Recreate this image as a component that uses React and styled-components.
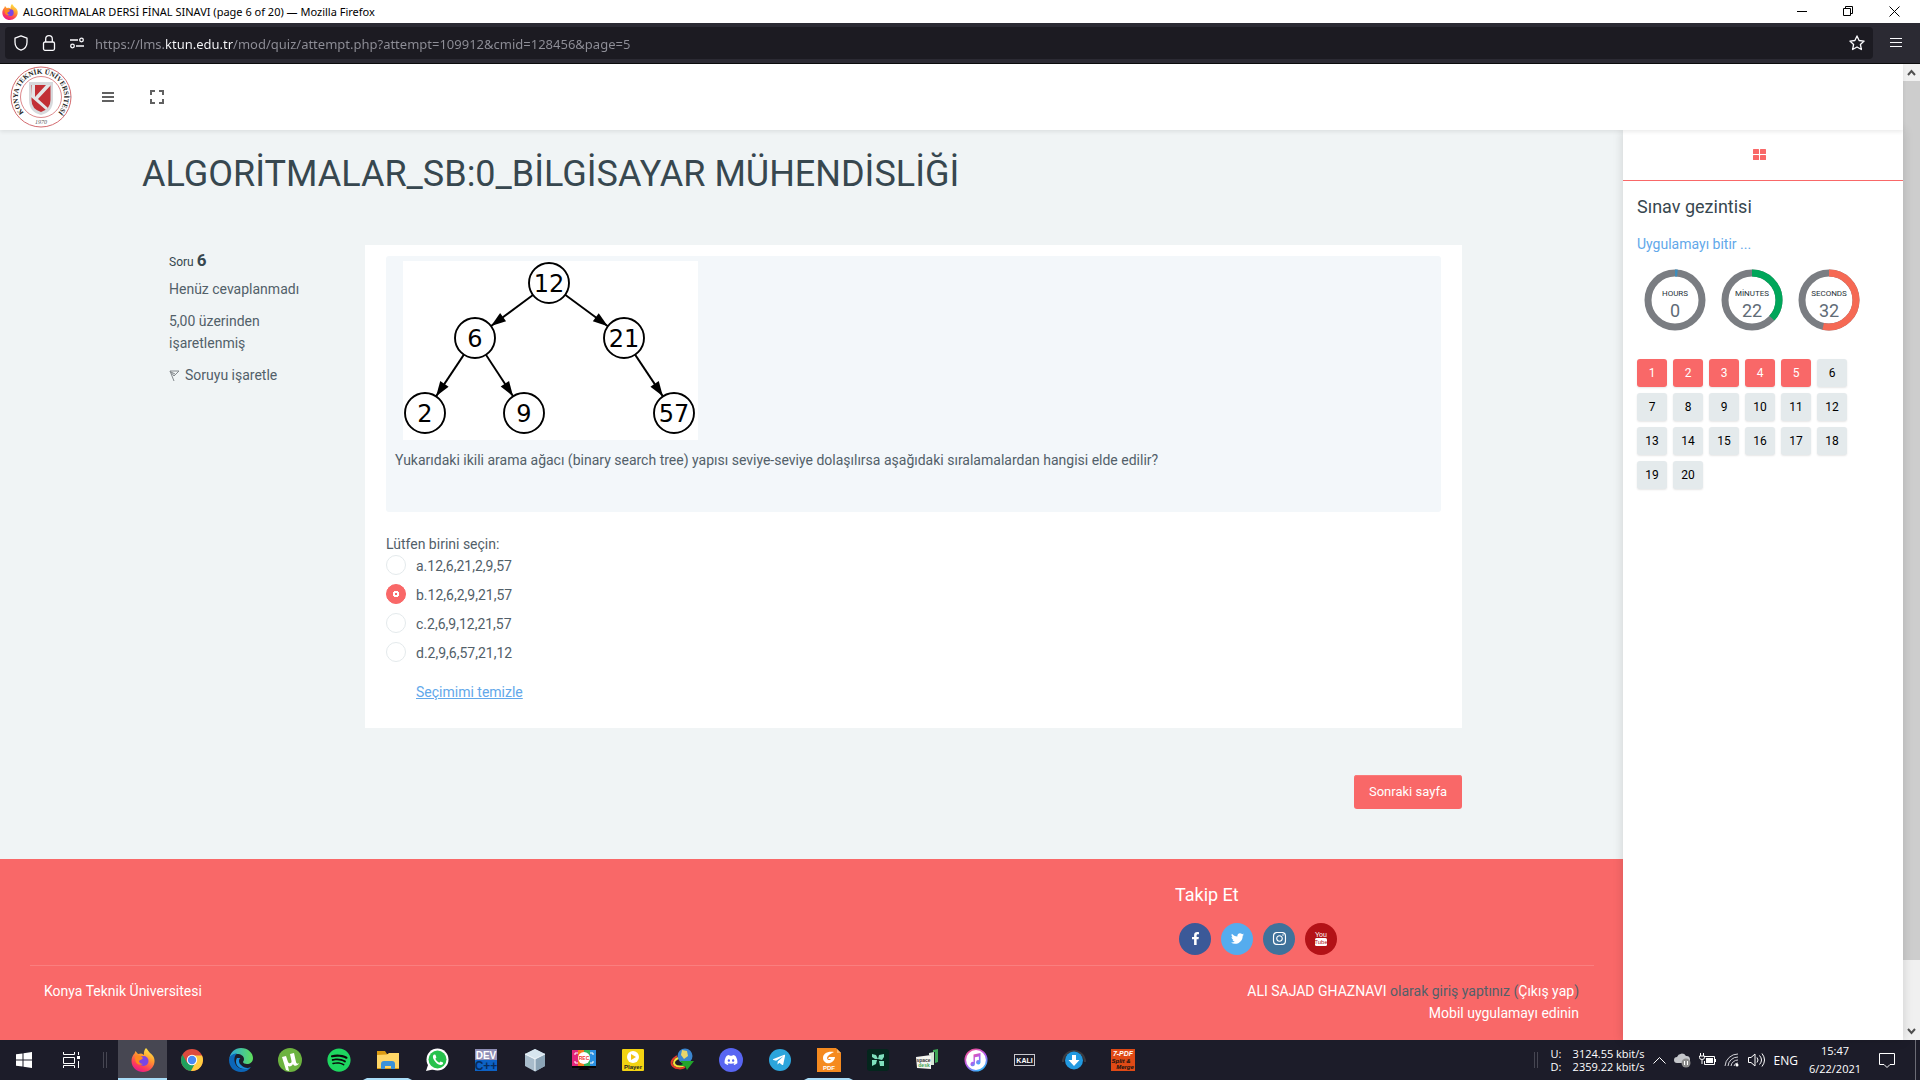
import React, { useState } from "react";
import styled, { createGlobalStyle, css } from "styled-components";
import { FaFacebookF, FaTwitter, FaInstagram, FaDiscord, FaTelegramPlane, FaSpotify } from "react-icons/fa";

const red = "#f96868";
const ui = `"Open Sans", "Noto Sans", sans-serif`;
const chromeFont = `"Noto Sans", "Open Sans", sans-serif`;

const GlobalStyle = createGlobalStyle`
  *, *::before, *::after { box-sizing: border-box; }
  body { margin: 0; background: #f0f4f5; }
  h1, h2, h3, p, fieldset, legend { margin: 0; padding: 0; border: 0; font-weight: 400; }
  button { font: inherit; border: 0; background: none; padding: 0; cursor: pointer; }
  svg { display: block; flex: none; }
  a { text-decoration: none; }
`;

const Screen = styled.div`
  min-height: 100vh;
  display: flex;
  flex-direction: column;
  font: 400 14px/22px Roboto, sans-serif;
  color: #526069;
`;

/* ---------- browser chrome ---------- */
const TitleBar = styled.header`
  height: 23px;
  display: flex;
  align-items: center;
  gap: 5px;
  padding: 0 20px 0 2px;
  background: #fff;
  color: #000;
  font: 11px/16px ${chromeFont};
`;
const WindowButtons = styled.div`
  margin-left: auto;
  display: flex;
  gap: 35px;
  button { width: 11px; height: 11px; }
`;
const NavBar = styled.div`
  height: 41px;
  display: flex;
  align-items: center;
  padding: 0 18px 0 5px;
  gap: 17px;
  background: #2b2a33;
  border-bottom: 1px solid #0c0c0d;
  color: #fbfbfe;
`;
const AddressBox = styled.form`
  flex: 1;
  height: 32px;
  display: flex;
  align-items: center;
  padding: 0 8px;
  background: #1c1b22;
  border-radius: 4px;
`;
const AddressIcons = styled.div`
  display: flex;
  align-items: center;
  gap: 12px;
  margin-right: 10px;
`;
const AddressInput = styled.input`
  flex: 1;
  min-width: 0;
  border: 0;
  outline: 0;
  padding: 2px 0 0;
  font: 13px/20px ${chromeFont};
  color: transparent;
  background: linear-gradient(90deg, #8f8f98 70px, #fbfbfe 70px 138px, #8f8f98 138px);
  -webkit-background-clip: text;
  background-clip: text;
`;

/* ---------- page ---------- */
const Viewport = styled.div`
  flex: 1;
  display: flex;
`;
const Page = styled.div`
  flex: 1;
  min-width: 0;
  display: flex;
  flex-direction: column;
`;
const SiteHeader = styled.header`
  position: relative;
  z-index: 2;
  height: 66px;
  display: flex;
  align-items: center;
  padding-left: 10px;
  background: #fff;
  box-shadow: 0 2px 4px rgba(0, 0, 0, 0.08);
  button { width: 49px; height: 40px; display: grid; place-items: center; color: #616161; }
`;
const Logo = styled.a`
  margin-right: 11px;
`;
const Columns = styled.div`
  flex: 1;
  display: flex;
`;
const Content = styled.div`
  flex: 1;
  min-width: 0;
  display: flex;
  flex-direction: column;
  background: #f0f4f5;
`;
const Main = styled.main`
  flex: 1;
  width: 100%;
  max-width: 1339px;
  margin: 0 auto;
  padding: 22px 0 50px;
`;
const Title = styled.h1`
  font-size: 36px;
  line-height: 44px;
  color: #37474f;
  margin-bottom: 49px;
`;
const Question = styled.section`
  display: flex;
  padding: 0 19px;
`;
const Info = styled.div`
  flex: 0 0 204px;
  padding: 4px 48px 0 8px;
  display: flex;
  flex-direction: column;
  gap: 10px;
`;
const QuestionNumber = styled.h3`
  font-size: 12px;
  line-height: 22px;
  color: #37474f;
  margin-bottom: -5px;
  strong { font-size: 17px; font-weight: 700; }
`;
const FlagLink = styled.a`
  display: flex;
  align-items: center;
  gap: 5px;
  color: #526069;
  white-space: nowrap;
`;
const Card = styled.form`
  flex: 1;
  min-width: 0;
  padding: 11px 21px 25px;
  background: #fff;
`;
const Formulation = styled.div`
  padding: 5px 9px 41px;
  margin-bottom: 21px;
  background: #f3f7fa;
  border-radius: 3px;
  p { margin-top: 9px; }
`;
const TreePicture = styled.svg`
  margin-left: 8px;
  background: #fff;
  font: 24px "DejaVu Sans", sans-serif;
`;
const Answers = styled.fieldset`
  display: flex;
  flex-direction: column;
  gap: 7px;
  legend { line-height: 22px; }
`;
const Option = styled.label`
  display: flex;
  gap: 10px;
`;
const Radio = styled.input.attrs({ type: "radio" })`
  appearance: none;
  width: 20px;
  height: 20px;
  margin: 0;
  border: 1px solid #e4eaec;
  border-radius: 50%;
  background: #fff;
  &:checked {
    border-color: ${red};
    background: radial-gradient(circle, ${red} 1px, #fff 1px, #fff 3px, ${red} 3px) ${red};
  }
`;
const ClearChoice = styled.a`
  display: block;
  width: fit-content;
  margin: 17px 0 0 30px;
  color: #62a8ea;
  text-decoration: underline;
`;
const Actions = styled.div`
  display: flex;
  justify-content: flex-end;
  padding: 47px 19px 0;
`;
const NextButton = styled.button`
  && {
    height: 34px;
    padding: 0 15px;
    font-size: 13px;
    color: #fff;
    background: ${red};
    border-radius: 3px;
    box-shadow: inset 0 1px 0 #fa7a7a;
  }
`;

/* ---------- footer ---------- */
const Footer = styled.footer`
  padding: 25px 29px 16px 30px;
  background: ${red};
  color: #526069;
  a { color: #fff; }
`;
const FollowRow = styled.div`
  display: flex;
  justify-content: flex-end;
  padding-bottom: 10px;
  border-bottom: 1px solid #fa7f7f;
`;
const Follow = styled.div`
  width: 419px;
  h2 { font-size: 18px; line-height: 22px; color: #fff; margin-bottom: 17px; }
`;
const Socials = styled.div`
  display: flex;
  gap: 10px;
  padding-left: 4px;
`;
const Social = styled.a`
  width: 32px;
  height: 32px;
  display: grid;
  place-items: center;
  padding-bottom: 2px;
  border-radius: 50%;
  background: ${(p) => p.$color};
`;
const Legal = styled.div`
  display: flex;
  justify-content: space-between;
  padding: 14px 15px 0 14px;
`;
const Account = styled.div`
  text-align: right;
`;

/* ---------- quiz navigation ---------- */
const Aside = styled.aside`
  position: relative;
  z-index: 1;
  flex: 0 0 280px;
  background: #fff;
  box-shadow: 0 0 10px rgba(0, 0, 0, 0.15);
`;
const TabBar = styled.div`
  height: 51px;
  border-bottom: 1px solid ${red};
  color: ${red};
  display: flex;
  button { flex: 1; display: grid; place-items: center; padding: 0 8px 2px 0; color: inherit; }
`;
const Navigation = styled.nav`
  padding: 15px 14px;
  h2 { font-size: 18px; line-height: 22px; color: #37474f; margin-bottom: 15px; }
`;
const FinishLink = styled.a`
  color: #62a8ea;
`;
const Timer = styled.div`
  display: flex;
  gap: 15px;
  margin: 14px 0 28px 7px;
`;
const Dial = styled.svg`
  font-family: Roboto, sans-serif;
`;
const Pages = styled.div`
  display: grid;
  grid-template-columns: repeat(6, 30px);
  gap: 6px;
`;
const PageLink = styled.a`
  height: 28px;
  border-radius: 3px;
  font-size: 12px;
  line-height: 28px;
  text-align: center;
  box-shadow: 0 1px 2px rgba(0, 0, 0, 0.1);
  ${(p) => (p.$done ? css`background: ${red}; color: #fff;` : css`background: #e4eaec; color: #000;`)}
`;

const ScrollTrack = styled.div`
  flex: 0 0 17px;
  display: flex;
  flex-direction: column;
  background: #f0f0f0;
  button { height: 17px; display: grid; place-items: center; }
`;
const ScrollRoom = styled.div`
  flex: 1;
  display: grid;
  grid-template-rows: 93.3% 1fr;
`;
const ScrollThumb = styled.div`
  background: #cdcdcd;
`;

/* ---------- taskbar ---------- */
const Taskbar = styled.div`
  height: 40px;
  display: flex;
  align-items: stretch;
  background: #1c1c29;
  color: #fff;
  font: 11px/13px ${ui};
`;
const SystemButtons = styled.div`
  width: 118px;
  display: flex;
  align-items: center;
  gap: 31px;
  padding-left: 16px;
  button { color: #fff; }
`;
const Grip = styled.span`
  width: 4px;
  height: 16px;
  margin-left: ${(p) => p.$lead}px;
  align-self: center;
  border: solid #464652;
  border-width: 0 1px;
`;
const AppButton = styled.button`
  && {
    width: 49px;
    display: grid;
    place-items: center;
    border: solid transparent;
    border-width: 2px 4px 2px;
    ${(p) => p.$running && css`border-bottom-color: #a9ddf8;`}
    ${(p) => p.$active && css`background: #474752; border: solid #474752; border-width: 2px 0; border-bottom-color: #a9ddf8;`}
  }
`;
const Tray = styled.div`
  margin-left: auto;
  display: flex;
  align-items: center;
  padding-right: 4px;
`;
const Meter = styled.div`
  display: grid;
  grid-template-columns: 22px auto;
  margin: 0 8px 0 13px;
`;
const TrayIcons = styled.div`
  display: flex;
  align-items: center;
  gap: 8px;
`;
const Language = styled.span`
  margin: 0 2px 0 9px;
  font-size: 12px;
`;
const Clock = styled.time`
  text-align: center;
  line-height: 18px;
  width: 70px;
  margin-right: 9px;
`;
const Notices = styled.div`
  padding-right: 20px;
  height: 40px;
  display: flex;
  align-items: center;
  border-right: 1px solid #6b6b75;
`;

/* ---------- drawings ---------- */
const FirefoxIcon = ({ size }) => (
  <svg width={size} height={size} viewBox="0 0 24 24">
    <defs>
      <linearGradient id={`fx${size}`} x1="0.8" y1="0" x2="0.3" y2="1">
        <stop offset="0" stopColor="#fff14f" /><stop offset="0.4" stopColor="#ff9a2e" />
        <stop offset="0.75" stopColor="#ff4057" /><stop offset="1" stopColor="#e5178f" />
      </linearGradient>
    </defs>
    <path d="M15 0c2 2 3 4 4 5 3 2 5 5 4.500 9-.7 6-5.500 10-11.500 10S.500 19.500.5 13c0-3 1-5.500 3-7.500L4.500 3 7 6l3-.5c1 0 2 .5 3 1.500C12.500 4 13.500 1.500 15 0z" fill={`url(#fx${size})`} />
    <circle cx="12.500" cy="13" r="5" fill="#7a45e5" />
    <path d="M5 8c3-1 5 0 7 2-1 2-3 1.500-4 3 0 2 2 3 4 3-3 2-7 0-7.500-3S4 9 5 8z" fill="#ff8a1e" />
  </svg>
);
const UniversitySeal = () => (
  <svg width="62" height="62" viewBox="0 0 62 62">
    <defs><path id="sealArc" d="M14.600 47.400A23.200 23.200 0 1 1 47.400 47.400" /></defs>
    <circle cx="31" cy="31" r="30" fill="#fff" stroke="#d36a6e" />
    <circle cx="31" cy="31" r="20.500" fill="none" stroke="#d36a6e" strokeWidth="0.800" />
    <text fontFamily='"Liberation Serif", serif' fontWeight="700" fontSize="7" fill="#222">
      <textPath href="#sealArc" startOffset="1">KONYA TEKNİK ÜNİVERSİTESİ</textPath>
    </text>
    <path d="M19 16h24v18q0 12-12 15-12-3-12-15z" fill="#d7d9dc" />
    <path d="M21.500 19h19v15q0 9-9.500 12-9.500-3-9.500-12z" fill="#c22f35" />
    <path d="M22 19l3 0v12L36 19h5L28 33l10 9-2 2L21 31z" fill="#e4e5e7" />
    <text x="31" y="58" textAnchor="middle" fontFamily='"Liberation Serif", serif' fontStyle="italic" fontSize="6" fill="#555">1970</text>
  </svg>
);

const nodes = { n12: [146, 22, "12"], n6: [72, 77, "6"], n21: [221, 77, "21"], n2: [22, 152, "2"], n9: [121, 152, "9"], n57: [271, 152, "57"] };
const edges = [["n12", "n6"], ["n12", "n21"], ["n6", "n2"], ["n6", "n9"], ["n21", "n57"]];
const Tree = () => (
  <TreePicture width="295" height="179" viewBox="0 0 295 179" role="img" aria-label="İkili arama ağacı">
    {edges.map(([from, to]) => {
      const [x1, y1] = nodes[from];
      const [x2, y2] = nodes[to];
      const d = Math.hypot(x2 - x1, y2 - y1);
      const ux = (x2 - x1) / d, uy = (y2 - y1) / d;
      const tx = x2 - ux * 20, ty = y2 - uy * 20;
      const bx = tx - ux * 15, by = ty - uy * 15;
      return (
        <g key={from + to}>
          <line x1={x1 + ux * 20} y1={y1 + uy * 20} x2={tx} y2={ty} stroke="#000" strokeWidth="1.900" />
          <polygon points={`${tx},${ty} ${bx - uy * 5},${by + ux * 5} ${bx + uy * 5},${by - ux * 5}`} />
        </g>
      );
    })}
    {Object.values(nodes).map(([x, y, label]) => (
      <g key={label}>
        <circle cx={x} cy={y} r="20" fill="#fff" stroke="#000" strokeWidth="1.900" />
        <text x={x} y={y + 9} textAnchor="middle">{label}</text>
      </g>
    ))}
  </TreePicture>
);

const TimeDial = ({ label, value, share, color }) => {
  const length = 2 * Math.PI * 27;
  return (
    <Dial width="62" height="62" viewBox="0 0 62 62">
      <circle cx="31" cy="31" r="27" fill="none" stroke="#7a7d82" strokeWidth="7" />
      <circle cx="31" cy="31" r="27" fill="none" stroke={color} strokeWidth="7" strokeDasharray={`${length * share} ${length}`} transform="rotate(-90 31 31)" />
      <text x="31" y="27" textAnchor="middle" fontSize="8" fill="#263238">{label}</text>
      <text x="31" y="48" textAnchor="middle" fontSize="18" fill="#5f6c77">{value}</text>
    </Dial>
  );
};

const Ico = ({ children, size = 24, w = 24, h = 24 }) => <svg width={size} height={size} viewBox={`0 0 ${w} ${h}`}>{children}</svg>;
const tiny = { fontFamily: '"Liberation Sans", sans-serif', fontWeight: 700, textAnchor: "middle" };

const apps = [
  ["Firefox", <FirefoxIcon size={24} />, "active"],
  ["Chrome", <Ico>
    <circle cx="12" cy="12" r="11" fill="#dd4b3e" />
    <path d="M2.500 6.500A11 11 0 0 0 11 23l5-8.500-4 2.500-5-2.500z" fill="#1fa15d" />
    <path d="M11 23A11 11 0 0 0 22 7.500H12l4.500 5z" fill="#ffcd41" />
    <circle cx="12" cy="12" r="5.200" fill="#fff" /><circle cx="12" cy="12" r="4.200" fill="#4a8af4" />
  </Ico>],
  ["Edge", <Ico>
    <defs><linearGradient id="edge" x1="0" y1="0.500" x2="1" y2="0.500"><stop offset="0" stopColor="#2aa5e0" /><stop offset="1" stopColor="#5fe05a" /></linearGradient></defs>
    <path d="M0 12C1 4 6 0 12 0c7 0 12 5 12 10 0 4-3 6-6 6-2 0-4-1-4-2s1-1 1-3c0-3-3-5-7-5-4 0-8 3-8 6z" fill="url(#edge)" />
    <path d="M0 12c0-4 4-6.500 8-6.500C5 8 5 12 6 15c1.500 4 5 6 9 6 3 0 5-1 7-2-2 3-5.500 5-10 5C5 24 0 19 0 12z" fill="#0c66b8" />
    <path d="M8 10c-2 3-1 8 3 10 4 2 8 1 10.500-.5-3 1-7 .5-9.500-2.500-1-1-2-2-2-4 0-1 .5-2.500 1.500-3z" fill="#1b8ddb" />
  </Ico>],
  ["uTorrent", <Ico>
    <circle cx="12" cy="12" r="12" fill="#6cb33f" />
    <path d="M4 9l4-1 2 6c1 2 4 1.500 3.500-1L12 6l4-1 2 9c.5 2 2 2 3 1-1 3-5 4-6 1-1 2-3 3-5 2l1 5-3-1z" fill="#fff" />
  </Ico>],
  ["Spotify", <Ico><circle cx="12" cy="12" r="10.500" fill="#0a0a0a" /><FaSpotify size={24} color="#1ed760" /></Ico>],
  ["Dosya Gezgini", <Ico>
    <path d="M1 3h8l2 3h12v15H1z" fill="#dc9b12" /><path d="M1 7l10-.500L13 5h10v15H1z" fill="#ffd666" />
    <path d="M5 21v-5a3 3 0 0 1 3-3h8a3 3 0 0 1 3 3v5h-4v-3H9v3z" fill="#3a92d8" />
  </Ico>, "running"],
  ["WhatsApp", <Ico><circle cx="12.500" cy="11.500" r="11" fill="#fff" /><path d="M1 23l3-9 6 7z" fill="#fff" /><circle cx="12.500" cy="11.500" r="9" fill="#27c24c" /><g transform="translate(4 3)"><path d="M5 3.500c-1.500 1-1.500 3 0 5.500s4 5 6.500 5 3-2 2.500-2.500l-2.500-1-1.200 1.200C8.500 11 7 9.500 6.400 7.800L7.400 6.600 6.500 3.800z" fill="#fff" /></g></Ico>],
  ["Dev-C++", <Ico>
    <rect x="1" y="1" width="22" height="11.500" fill="#8f8eb6" /><rect x="1" y="12" width="22" height="11" fill="#0d62c5" />
    <text x="12" y="11" fontSize="10" fill="#fff" {...tiny}>DEV</text><text x="12" y="22" fontSize="12" fill="#082c5c" {...tiny}>C++</text>
  </Ico>],
  ["VirtualBox", <Ico>
    <path d="M12 1l10 5v12l-10 5.500L2 18V6z" fill="#a8bccb" /><path d="M12 1l10 5-10 5L2 6z" fill="#d7e6ef" /><path d="M12 11l10-5v12l-10 5.500z" fill="#8ba4b6" /><path d="M2 6l10 5 10-5M12 11v12" stroke="#f4fafd" fill="none" />
  </Ico>],
  ["Ekran Kaydedici", <Ico>
    <rect y="2" width="6" height="16" fill="#e3257b" /><rect x="6" y="2" width="6" height="16" fill="#f27b21" /><rect x="12" y="2" width="6" height="16" fill="#30b45a" /><rect x="18" y="2" width="6" height="16" fill="#2a8fe0" />
    <path d="M3 7V5h3M18 5h3v2M3 13v2h3M18 15h3v-2" stroke="#fff" fill="none" /><circle cx="12" cy="10" r="6" fill="#fff" />
    <text x="12" y="12" fontSize="5" fill="#e33" {...tiny}>REC</text><path d="M0 18h24v2H0zM8 20h8l2 2H6z" fill="#050508" />
  </Ico>],
  ["Player", <Ico>
    <rect x="1" y="1" width="22" height="22" rx="1" fill="#f3d312" /><circle cx="12" cy="9" r="6" fill="#fff" /><path d="M10 6l5 3-5 3z" fill="#f3c412" />
    <text x="12" y="21" fontSize="6" fill="#222" {...tiny}>Player</text>
  </Ico>],
  ["Internet Download Manager", <Ico>
    <circle cx="15" cy="8" r="7.500" fill="#3b86cf" /><path d="M12 2l5 1 1 5-4 3-3-4z" fill="#e8d66a" />
    <path d="M7 8C2 11 0 15 3 18s9 3 12 1" fill="none" stroke="#e33b2a" strokeWidth="2" /><path d="M8 10c-4 2-5 5-3 7s7 2 10 0" fill="none" stroke="#f4e23c" strokeWidth="2" />
    <path d="M10 13l14 0-7 9-2-4-6 0 4-2z" fill="#22a52b" />
  </Ico>],
  ["Discord", <Ico><circle cx="12" cy="12" r="12" fill="#5865f2" /><g transform="translate(5 5)"><FaDiscord size={14} color="#fff" /></g></Ico>],
  ["Telegram", <Ico><circle cx="12" cy="12" r="11" fill="#2ca5dc" /><g transform="translate(4 5)"><FaTelegramPlane size={14} color="#fff" /></g></Ico>],
  ["Foxit PDF", <Ico>
    <rect width="24" height="24" fill="#f58a1f" /><path d="M19 0h5v5z" fill="#1c1c29" /><path d="M20 1v4h4z" fill="#fbb56a" />
    <path d="M17 4c-7-1-11 2-11 6s4 6 7 5 5-4 5-6h-6l-1 2h3c-1 2-4 1-4-1s3-4 7-6z" fill="#fff" />
    <text x="12" y="22" fontSize="6" fill="#fff" {...tiny}>PDF</text>
  </Ico>, "running"],
  ["Camtasia", <Ico>
    <rect x="1" y="1" width="22" height="22" rx="3" fill="#04261d" />
    <path d="M6 6l4 1 2 4-3 0-3-2zM18 6l-5 1-1 4 4 1 2-3zM6 12h5l-1 4-4 2zM18 13h-5l1 5h4z" fill="#7fe0bd" />
  </Ico>],
  ["spacedesk", <Ico>
    <path d="M18 2l5-1v13l-3 1V4h-2z" fill="#3fa757" /><path d="M14 5l5-1v13h-3V7h-2z" fill="#d8e8d8" />
    <path d="M1 9l15-2v14L2 20z" fill="#f4f4f0" /><text x="8.500" y="14" fontSize="5" fill="#333" {...tiny}>space</text><text x="9" y="19" fontSize="5" fill="#3fa757" {...tiny}>desk</text>
  </Ico>],
  ["iTunes", <Ico>
    <defs><linearGradient id="tune" x1="0" y1="0" x2="0.600" y2="1"><stop offset="0" stopColor="#f84f85" /><stop offset="0.600" stopColor="#b35bef" /><stop offset="1" stopColor="#3fb0fa" /></linearGradient></defs>
    <circle cx="12" cy="12" r="10.700" fill="#fff" stroke="url(#tune)" strokeWidth="1.600" />
    <path d="M9.500 6.500l7-1.500v9.500a2.200 2.200 0 1 1-1.600-2.300V8.500l-4 .8v7a2.200 2.200 0 1 1-1.400-2.300z" fill="url(#tune)" />
  </Ico>],
  ["Kali", <Ico>
    <rect x="1.500" y="6.500" width="20" height="11" fill="none" stroke="#c8c8ce" /><text x="11.500" y="15" fontSize="7" fill="#fff" {...tiny}>KALI</text>
  </Ico>],
  ["İndirici", <Ico>
    <path d="M1 14a11 11 0 0 1 22 0" fill="none" stroke="#3b3b40" strokeWidth="2" /><circle cx="12" cy="12.500" r="9" fill="#2299e0" />
    <path d="M10 7h4v5h3.500L12 18l-5.500-6H10z" fill="#fff" />
  </Ico>],
  ["7-PDF", <Ico>
    <rect y="1" width="24" height="22" fill="#e04a16" />
    <g fontStyle="italic"><text x="12" y="8" fontSize="7" fill="#fff" {...tiny}>7-PDF</text><text x="10" y="15" fontSize="6" fill="#111" {...tiny}>Split &amp;</text><text x="14" y="21" fontSize="6" fill="#111" {...tiny}>Merge</text></g>
  </Ico>],
];

const options = ["a.12,6,21,2,9,57", "b.12,6,2,9,21,57", "c.2,6,9,12,21,57", "d.2,9,6,57,21,12"];
const stop = (e) => e.preventDefault();

export default function App() {
  const [choice, setChoice] = useState(1);
  return (
    <Screen>
      <GlobalStyle />
      <TitleBar>
        <FirefoxIcon size={16} />
        <span>ALGORİTMALAR DERSİ FİNAL SINAVI (page 6 of 20) — Mozilla Firefox</span>
        <WindowButtons>
          <button aria-label="Minimize"><svg width="11" height="11"><path d="M0 5.500h10" stroke="#000" /></svg></button>
          <button aria-label="Restore"><svg width="11" height="11"><path d="M.5 2.500h7v7h-7zM2.500 2.500v-2h7v7h-2" fill="none" stroke="#000" /></svg></button>
          <button aria-label="Close"><svg width="11" height="11"><path d="M.5.500l10 10M10.500.500l-10 10" stroke="#000" /></svg></button>
        </WindowButtons>
      </TitleBar>
      <NavBar>
        <AddressBox onSubmit={stop}>
          <AddressIcons>
            <svg width="16" height="16" viewBox="0 0 16 16" fill="none" stroke="currentColor" strokeWidth="1.300"><path d="M8 .8l6 2.400v4c0 4-2.500 6.800-6 8-3.500-1.200-6-4-6-8v-4z" strokeLinejoin="round" /></svg>
            <svg width="16" height="16" viewBox="0 0 16 16" fill="none" stroke="currentColor" strokeWidth="1.300"><rect x="2.500" y="7" width="11" height="8.300" rx="1.500" /><path d="M4.700 7V4a3.300 3.300 0 0 1 6.600 0v3" /></svg>
            <svg width="16" height="16" viewBox="0 0 16 16" fill="none" stroke="currentColor" strokeWidth="1.300"><path d="M1 5h8M7 11h8" /><circle cx="12.500" cy="5" r="1.800" /><circle cx="3.500" cy="11" r="1.800" /></svg>
          </AddressIcons>
          <AddressInput aria-label="Adres" readOnly value="https://lms.ktun.edu.tr/mod/quiz/attempt.php?attempt=109912&cmid=128456&page=5" />
          <svg width="16" height="16" viewBox="0 0 16 16" fill="none" stroke="currentColor" strokeWidth="1.300" strokeLinejoin="round"><path d="M8 .9l2.100 4.600 5 .6-3.700 3.400 1 5L8 12l-4.400 2.500 1-5L.9 6.100l5-.6z" /></svg>
        </AddressBox>
        <svg width="12" height="12" stroke="#fbfbfe"><path d="M0 1.500h12M0 5.500h12M0 9.500h12" /></svg>
      </NavBar>

      <Viewport>
        <Page>
          <SiteHeader>
            <Logo href="#" aria-label="Konya Teknik Üniversitesi"><UniversitySeal /></Logo>
            <button aria-label="Menü"><svg width="12" height="10"><path d="M0 1h12M0 5h12M0 9h12" stroke="currentColor" strokeWidth="2" /></svg></button>
            <button aria-label="Tam ekran"><svg width="14" height="14" fill="none" stroke="currentColor" strokeWidth="2"><path d="M1 5V1h4M9 1h4v4M13 9v4H9M5 13H1V9" /></svg></button>
          </SiteHeader>
          <Columns>
            <Content>
              <Main>
                <Title>ALGORİTMALAR_SB:0_BİLGİSAYAR MÜHENDİSLİĞİ</Title>
                <Question>
                  <Info>
                    <QuestionNumber>Soru <strong>6</strong></QuestionNumber>
                    <p>Henüz cevaplanmadı</p>
                    <p>5,00 üzerinden işaretlenmiş</p>
                    <FlagLink href="#">
                      <svg width="11" height="14" viewBox="0 0 11 14" fill="none" stroke="#83888c"><path d="M1 3l4 10M1 3l9 0-5 5zM2 4l4 2" /></svg>
                      Soruyu işaretle
                    </FlagLink>
                  </Info>
                  <Card onSubmit={stop}>
                    <Formulation>
                      <Tree />
                      <p>Yukarıdaki ikili arama ağacı (binary search tree) yapısı seviye-seviye dolaşılırsa aşağıdaki sıralamalardan hangisi elde edilir?</p>
                    </Formulation>
                    <Answers>
                      <legend>Lütfen birini seçin:</legend>
                      {options.map((text, i) => (
                        <Option key={text}>
                          <Radio name="answer" checked={choice === i} onChange={() => setChoice(i)} />
                          {text}
                        </Option>
                      ))}
                    </Answers>
                    <ClearChoice href="#" onClick={(e) => { stop(e); setChoice(-1); }}>Seçimimi temizle</ClearChoice>
                  </Card>
                </Question>
                <Actions><NextButton>Sonraki sayfa</NextButton></Actions>
              </Main>
              <Footer>
                <FollowRow>
                  <Follow>
                    <h2>Takip Et</h2>
                    <Socials>
                      <Social href="#" $color="#3b5998" aria-label="Facebook"><FaFacebookF size={13} /></Social>
                      <Social href="#" $color="#55acee" aria-label="Twitter"><FaTwitter size={13} /></Social>
                      <Social href="#" $color="#3f729b" aria-label="Instagram"><FaInstagram size={15} /></Social>
                      <Social href="#" $color="#b31217" aria-label="YouTube">
                        <svg width="14" height="15" viewBox="0 0 14 15">
                          <text x="7" y="6" fontSize="7" fill="#fff" {...tiny} fontWeight={400}>You</text>
                          <rect x="1" y="7" width="12" height="8" rx="1.500" fill="#fff" />
                          <text x="7" y="13" fontSize="6" fill="#b31217" {...tiny} fontWeight={400}>Tube</text>
                        </svg>
                      </Social>
                    </Socials>
                  </Follow>
                </FollowRow>
                <Legal>
                  <a href="#">Konya Teknik Üniversitesi</a>
                  <Account>
                    <div><a href="#">ALI SAJAD GHAZNAVI</a> olarak giriş yaptınız (<a href="#">Çıkış yap</a>)</div>
                    <a href="#">Mobil uygulamayı edinin</a>
                  </Account>
                </Legal>
              </Footer>
            </Content>
            <Aside>
              <TabBar>
                <button aria-label="Bloklar"><svg width="13" height="11" fill="currentColor"><rect width="6" height="5" rx="0.500" /><rect x="7" width="6" height="5" rx="0.500" /><rect y="6" width="6" height="5" rx="0.500" /><rect x="7" y="6" width="6" height="5" rx="0.500" /></svg></button>
              </TabBar>
              <Navigation>
                <h2>Sınav gezintisi</h2>
                <FinishLink href="#">Uygulamayı bitir ...</FinishLink>
                <Timer>
                  <TimeDial label="HOURS" value="0" share={0.015} color="#3c8dbc" />
                  <TimeDial label="MİNUTES" value="22" share={22 / 60} color="#00a65a" />
                  <TimeDial label="SECONDS" value="32" share={32 / 60} color="#f56954" />
                </Timer>
                <Pages>
                  {Array.from({ length: 20 }, (_, i) => (
                    <PageLink key={i} href="#" $done={i < 5}>{i + 1}</PageLink>
                  ))}
                </Pages>
              </Navigation>
            </Aside>
          </Columns>
        </Page>
        <ScrollTrack>
          <button aria-label="Yukarı"><svg width="9" height="7"><path d="M1 6l3.500-4L8 6" fill="none" stroke="#505050" strokeWidth="2" /></svg></button>
          <ScrollRoom><ScrollThumb /></ScrollRoom>
          <button aria-label="Aşağı"><svg width="9" height="7"><path d="M1 1l3.500 4L8 1" fill="none" stroke="#505050" strokeWidth="2" /></svg></button>
        </ScrollTrack>
      </Viewport>

      <Taskbar>
        <SystemButtons>
          <button aria-label="Başlat"><svg width="16" height="16" fill="#fff"><path d="M0 2.300L6.500 1.400V7.500H0zM7.500 1.200L16 0v7.500H7.500zM0 8.500h6.500v6.100L0 13.700zM7.500 8.500H16V16l-8.500-1.200z" /></svg></button>
          <button aria-label="Görev görünümü"><svg width="17" height="16" fill="none" stroke="#fff"><path d="M.5 0v2.500h11V0M.5 5.500h11v6H.5zM.5 16v-2.500h11V16M15.500 0v3M15.500 9v7" /><path d="M14 4h3v3h-3z" fill="#fff" stroke="none" /></svg></button>
          <Grip $lead={-8} />
        </SystemButtons>
        {apps.map(([name, icon, state]) => (
          <AppButton key={name} aria-label={name} $active={state === "active"} $running={state === "running"}>{icon}</AppButton>
        ))}
        <Tray>
          <Grip $lead={0} />
          <Meter><span>U:</span><span>3124.55 kbit/s</span><span>D:</span><span>2359.22 kbit/s</span></Meter>
          <TrayIcons>
            <svg width="13" height="8"><path d="M.5 7.500l6-6 6 6" fill="none" stroke="#fff" /></svg>
            <svg width="17" height="16"><path d="M3 11a3 3 0 0 1 0-6 5 5 0 0 1 9-1 3 3 0 0 1 1 7z" fill="#c4c6ca" /><circle cx="12" cy="11" r="4.500" fill="#8c8c8c" /><path d="M10.500 9v4M13.500 9v4" stroke="#fff" /></svg>
            <svg width="17" height="14" fill="none" stroke="#fff"><path d="M6 3.500h9.500v8h-10V8M16.500 6v3" /><path d="M7 5h7v5H7z" fill="#fff" stroke="none" /><path d="M1.500 0v3M4.500 0v3M.5 3h5v1.500q0 2-2.500 2t-2.500-2zM3 7v4" /></svg>
            <svg width="16" height="16" fill="none" stroke="#d5d5da"><path d="M1 14A13 13 0 0 1 14 2M4 14A10 10 0 0 1 14 5M7 14a7 7 0 0 1 7-6M10 14a4 4 0 0 1 4-3" /><circle cx="13" cy="13" r="1.500" fill="#fff" stroke="none" /></svg>
            <svg width="17" height="14" fill="none" stroke="#fff"><path d="M.5 4.500h2.500l4-3.500v12l-4-3.500H.5zM9 4.500q2 2.500 0 5M11.500 2.500q4 4.500 0 9M14 .5q5 6.500 0 13" /></svg>
          </TrayIcons>
          <Language>ENG</Language>
          <Clock>15:47<br />6/22/2021</Clock>
          <Notices><svg width="16" height="17" fill="none" stroke="#fff"><path d="M.5 1.500h15v11H11l-3 3-3-3H.5z" /></svg></Notices>
        </Tray>
      </Taskbar>
    </Screen>
  );
}
